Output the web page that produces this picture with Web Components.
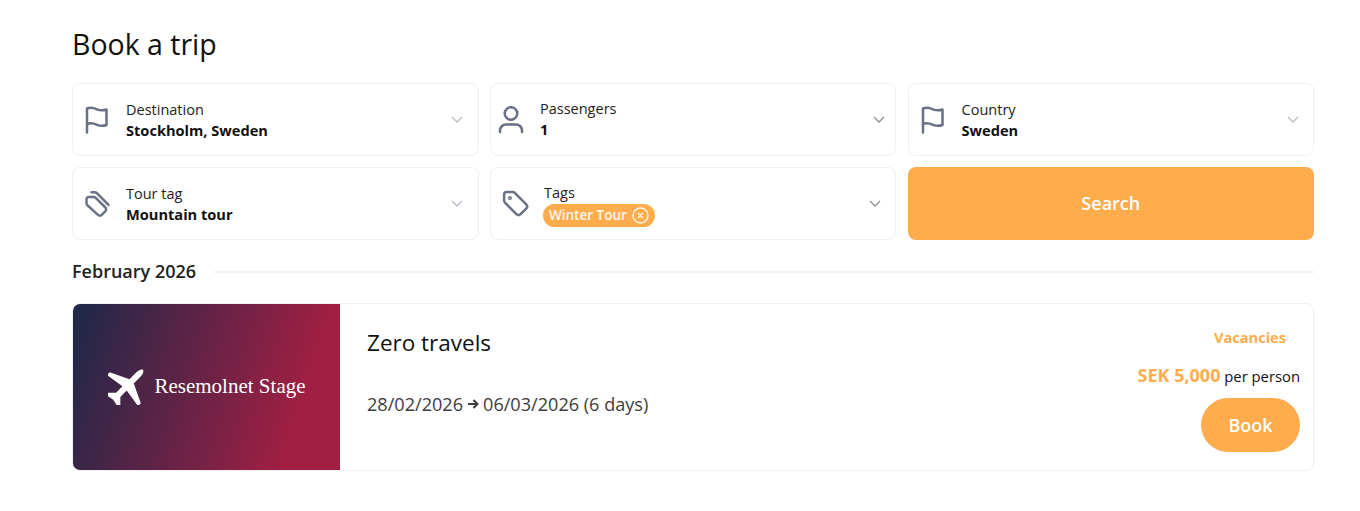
<!DOCTYPE html>
<html lang="en">
<head>
<meta charset="utf-8">
<title>Book a trip</title>
<style>
  html, body { margin: 0; background: #fff; }
  body { font-family: "Open Sans", sans-serif; color: #111; }
</style>
</head>
<body>
<trip-page>
  <search-grid>
    <select-field label="Destination" value="Stockholm, Sweden" icon="flag" end="15"></select-field>
    <select-field label="Passengers" value="1" icon="person" chevron="#8b8e99" pad="6.500" gap="14.500" shift="0" end="10"></select-field>
    <select-field label="Country" value="Sweden" icon="flag"></select-field>
    <select-field label="Tour tag" value="Mountain tour" icon="tags" end="15"></select-field>
    <select-field label="Tags" icon="tag" chevron="#8b8e99" pad="10" gap="15" shift="1" end="14">
      <tag-chip>Winter Tour</tag-chip>
    </select-field>
    <search-button>Search</search-button>
  </search-grid>
  <month-divider>February 2026</month-divider>
  <trip-card title="Zero travels" from="28/02/2026" to="06/03/2026" days="6 days" price="SEK 5,000" status="Vacancies"></trip-card>
</trip-page>

<script>
const ICONS = {
  flag: '<path d="M3 26.500V2.500c4-1.500 7-.5 10 .8 3 1.300 6 1.500 9.500.2v15.500c-3.500 1.300-6.500 1.100-9.500-.2-3-1.300-6-2.300-10-.8"/>',
  person: '<circle cx="14" cy="7.500" r="6.300"/><path d="M3 26v-1.500a6 6 0 0 1 6-6h10a6 6 0 0 1 6 6V26"/>',
  tag: '<path d="M5.500 2h6.200a3 3 0 0 1 2.100.9l11.400 11.400a3 3 0 0 1 0 4.200l-5.600 5.600a3 3 0 0 1-4.200 0L4 12.700a3 3 0 0 1-.9-2.100V4.500A2.500 2.500 0 0 1 5.500 2z"/><circle cx="9" cy="8" r=".7"/>',
  tags: '<path d="M4.800 7h4.900a3 3 0 0 1 2.100.9l9.600 9.600a2.600 2.600 0 0 1 0 3.700l-3.700 3.700a2.600 2.600 0 0 1-3.700 0L3.400 15.300a3 3 0 0 1-.9-2.100V9.300A2.300 2.300 0 0 1 4.800 7z"/><path d="M7.500 2.300h3.300a3 3 0 0 1 2.100.9l11.600 11.600"/>'
};

class TripPage extends HTMLElement {
  constructor() {
    super();
    this.attachShadow({ mode: 'open' }).innerHTML = `
      <style>
        :host { display: block; padding: 24px 46px 40px 72px; }
        h1 { margin: 0 0 18px; font: 400 28.500px/41px "Open Sans", sans-serif; color: #111; }
      </style>
      <h1>Book a trip</h1>
      <slot></slot>`;
  }
}
customElements.define('trip-page', TripPage);

class SearchGrid extends HTMLElement {
  constructor() {
    super();
    this.attachShadow({ mode: 'open' }).innerHTML = `
      <style>
        :host { display: grid; grid-template-columns: 406.700px 406.300px 1fr; grid-auto-rows: 73px; gap: 11px 11.300px; }
      </style>
      <slot></slot>`;
  }
}
customElements.define('search-grid', SearchGrid);

class SelectField extends HTMLElement {
  constructor() {
    super();
    const icon = ICONS[this.getAttribute('icon')] || '';
    const pad = this.getAttribute('pad') || 11;
    const gap = this.getAttribute('gap') || 14;
    const shift = this.getAttribute('shift') || 1;
    const end = this.getAttribute('end') || 14;
    const chevron = this.getAttribute('chevron') || '#b9bcc6';
    const value = this.getAttribute('value');
    this.attachShadow({ mode: 'open' }).innerHTML = `
      <style>
        :host {
          display: flex; align-items: center; box-sizing: border-box;
          padding: 0 ${end}px 0 ${pad}px; gap: ${gap}px;
          border: 1px solid #f0f0f1; border-radius: 8px; background: #fff;
        }
        .icon { flex: none; width: 28px; height: 28px; fill: none; stroke: #6a7186; stroke-width: 2.500; stroke-linecap: round; stroke-linejoin: round; }
        .text { flex: 1; min-width: 0; position: relative; top: ${shift}px; }
        .label { font-size: 14.500px; line-height: 20px; color: #222; }
        .value { font-size: 14.600px; line-height: 21px; font-weight: 700; color: #111; }
        ::slotted(tag-chip) { margin: 1px 0 0 -1px; }
        .chev { flex: none; width: 12px; height: 8px; fill: none; stroke: ${chevron}; stroke-width: 1.300; }
      </style>
      <svg class="icon" viewBox="0 0 28 28">${icon}</svg>
      <div class="text">
        <div class="label">${this.getAttribute('label')}</div>
        ${value ? `<div class="value">${value}</div>` : '<slot></slot>'}
      </div>
      <svg class="chev" viewBox="0 0 12 8"><path d="M1 1l5 5 5-5"/></svg>`;
  }
}
customElements.define('select-field', SelectField);

class TagChip extends HTMLElement {
  constructor() {
    super();
    this.attachShadow({ mode: 'open' }).innerHTML = `
      <style>
        :host {
          display: inline-flex; align-items: center; gap: 5px; height: 23px; box-sizing: border-box;
          padding: 0 6px; border-radius: 12px; background: #ffac4d; color: #fdf6ee;
          font-size: 13.500px; font-weight: 600;
        }
        svg { width: 17px; height: 17px; fill: none; stroke: #fdf6ee; stroke-width: 1.300; }
      </style>
      <slot></slot>
      <svg viewBox="0 0 17 17"><circle cx="8.500" cy="8.500" r="7.500"/><path d="M6 6l5 5M11 6l-5 5"/></svg>`;
  }
}
customElements.define('tag-chip', TagChip);

class SearchButton extends HTMLElement {
  constructor() {
    super();
    this.attachShadow({ mode: 'open' }).innerHTML = `
      <style>
        :host {
          display: flex; align-items: center; justify-content: center; padding-bottom: 2px;
          border-radius: 8px; background: #ffac4d; color: #fff;
          font-size: 18px; font-weight: 600;
        }
      </style>
      <slot></slot>`;
  }
}
customElements.define('search-button', SearchButton);

class MonthDivider extends HTMLElement {
  constructor() {
    super();
    this.attachShadow({ mode: 'open' }).innerHTML = `
      <style>
        :host {
          display: flex; align-items: center; gap: 18px; margin: 19px 0 20px;
          font-size: 18px; line-height: 24px; font-weight: 600; color: #222;
        }
        i { flex: 1; height: 2px; margin-top: 2px; background: #f2f2f3; }
      </style>
      <slot></slot><i></i>`;
  }
}
customElements.define('month-divider', MonthDivider);

class TripCard extends HTMLElement {
  constructor() {
    super();
    const a = n => this.getAttribute(n);
    this.attachShadow({ mode: 'open' }).innerHTML = `
      <style>
        :host {
          display: flex; height: 168px; box-sizing: border-box;
          border: 1px solid #f0f0f1; border-radius: 8px; background: #fff;
        }
        .banner {
          flex: none; width: 267px; display: flex; align-items: center; justify-content: center; gap: 10px;
          border-radius: 7px 0 0 7px; color: #fff;
          background: linear-gradient(108deg, #1c2849 0%, #a11f43 82%);
        }
        .banner svg { flex: none; width: 36px; height: 36px; margin-left: 1px; fill: #fff; }
        .banner span { font: 400 21px/26px "Liberation Serif", serif; position: relative; top: -1px; }
        .info { flex: 1; padding: 22px 0 0 27px; }
        h2 { margin: 0 0 32px; font: 400 22.500px/34px "Open Sans", sans-serif; color: #111; }
        .dates { display: flex; align-items: center; gap: 4px; font-size: 18.100px; line-height: 24px; color: #3d3d3d; }
        .dates svg { width: 12px; height: 10px; fill: none; stroke: #3d3d3d; stroke-width: 2; }
        .side {
          display: flex; flex-direction: column; align-items: flex-end;
          padding: 23px 13px 0 0;
        }
        .status { margin-right: 14px; font-size: 14.600px; line-height: 20px; font-weight: 700; color: #ffac4d; }
        .price { margin: 15px 0 9px; font-size: 14.800px; line-height: 26px; color: #111; }
        .price b { font-size: 18px; font-weight: 700; color: #ffac4d; }
        .book {
          display: flex; align-items: center; justify-content: center; width: 99px; height: 54px;
          border-radius: 27px; background: #ffac4d; color: #fff; font-size: 18px; font-weight: 600;
        }
      </style>
      <div class="banner">
        <svg viewBox="-18 -18 36 36"><path transform="rotate(-45)" d="M24 0c0-2-4-3-7-3H8L-1-22h-4l3 19h-9l-6-6h-3l2 9-2 9h3l6-6h9l-3 19h4L8 3h9c3 0 7-1 7-3z"/></svg>
        <span>Resemolnet Stage</span>
      </div>
      <div class="info">
        <h2>${a('title')}</h2>
        <div class="dates"><span>${a('from')}</span><svg viewBox="0 0 12 10"><path d="M1 5h9.500M6.500 1l4 4-4 4"/></svg><span>${a('to')} (${a('days')})</span></div>
      </div>
      <div class="side">
        <div class="status">${a('status')}</div>
        <div class="price"><b>${a('price')}</b> per person</div>
        <div class="book">Book</div>
      </div>`;
  }
}
customElements.define('trip-card', TripCard);
</script>
</body>
</html>
